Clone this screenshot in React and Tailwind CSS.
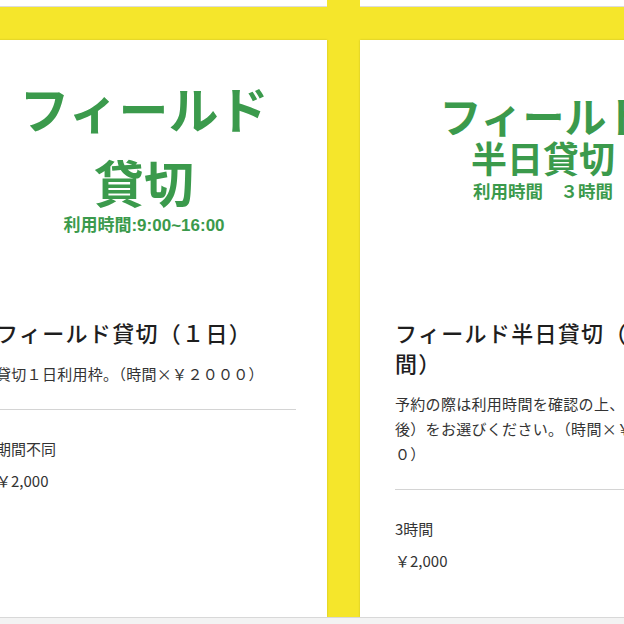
const plans = [
  {
    id: 'day',
    header: (
      <div className="pt-[30px] flex flex-col items-center text-[#3b9a4c] font-bold">
        <div className="text-[50px] leading-[74px]">フィールド</div>
        <div className="text-[50px] leading-[74px]">貸切</div>
        <div className="-mt-[3px] text-[17px] leading-[22px] font-['Liberation_Sans','Noto_Sans_CJK_JP',sans-serif]">
          利用時間:9:00~16:00
        </div>
      </div>
    ),
    title: 'フィールド貸切（１日）',
    desc: '貸切１日利用枠。（時間×￥２０００）',
    term: '期間不同',
    price: '￥2,000',
  },
  {
    id: 'half',
    header: (
      <div className="pt-[52px] flex flex-col items-center text-[#3b9a4c] font-bold">
        <div className="text-[42px] leading-[46px] pl-[2px]">フィールド</div>
        <div className="text-[36px] leading-[38px]">半日貸切</div>
        <div className="text-[17.5px] leading-[30px]">利用時間　３時間</div>
      </div>
    ),
    title: 'フィールド半日貸切（３時間）',
    desc: '予約の際は利用時間を確認の上、（午前/午後）をお選びください。（時間×￥２０００）',
    term: '3時間',
    price: '￥2,000',
  },
];

function PlanCard({ plan }) {
  return (
    <div className="w-[366px] shrink-0 h-full bg-white shadow-[0_0_2px_rgba(0,0,0,0.18)] flex flex-col">
      <div className="h-[250px]">{plan.header}</div>
      <div className="pl-[35px] pr-[31px] pt-[27px]">
        <h2 className="text-[22px] leading-[30px] tracking-[0.06em] font-medium text-[#1e1e1e]">
          {plan.title}
        </h2>
        <p className="mt-[14px] text-[15px] leading-[25px] tracking-[0.02em] text-[#333]">
          {plan.desc}
        </p>
        <div className="mt-[23px] border-t border-[#d4d4d4]" />
        <div className="pt-[27px] text-[15px] leading-[24px] text-[#333]">
          <div>{plan.term}</div>
          <div className="mt-[8px]">{plan.price}</div>
        </div>
      </div>
    </div>
  );
}

export default function App() {
  return (
    <div className="w-[624px] h-[624px] overflow-hidden bg-[#f5e62b] flex flex-col font-['Noto_Sans_CJK_JP',sans-serif]">
      <div className="h-[7px] shrink-0 flex gap-[33px] -ml-[39px]">
        <div className="w-[366px] shrink-0 bg-white border-b border-[#dcdcdc]" />
        <div className="w-[366px] shrink-0 bg-white border-b border-[#dcdcdc]" />
      </div>
      <div className="h-[577px] shrink-0 mt-[33px] flex gap-[33px] -ml-[39px]">
        {plans.map((p) => (
          <PlanCard key={p.id} plan={p} />
        ))}
      </div>
      <div className="h-[7px] shrink-0 bg-[#f3f3f3] border-t border-[#d8d8d8]" />
    </div>
  );
}
